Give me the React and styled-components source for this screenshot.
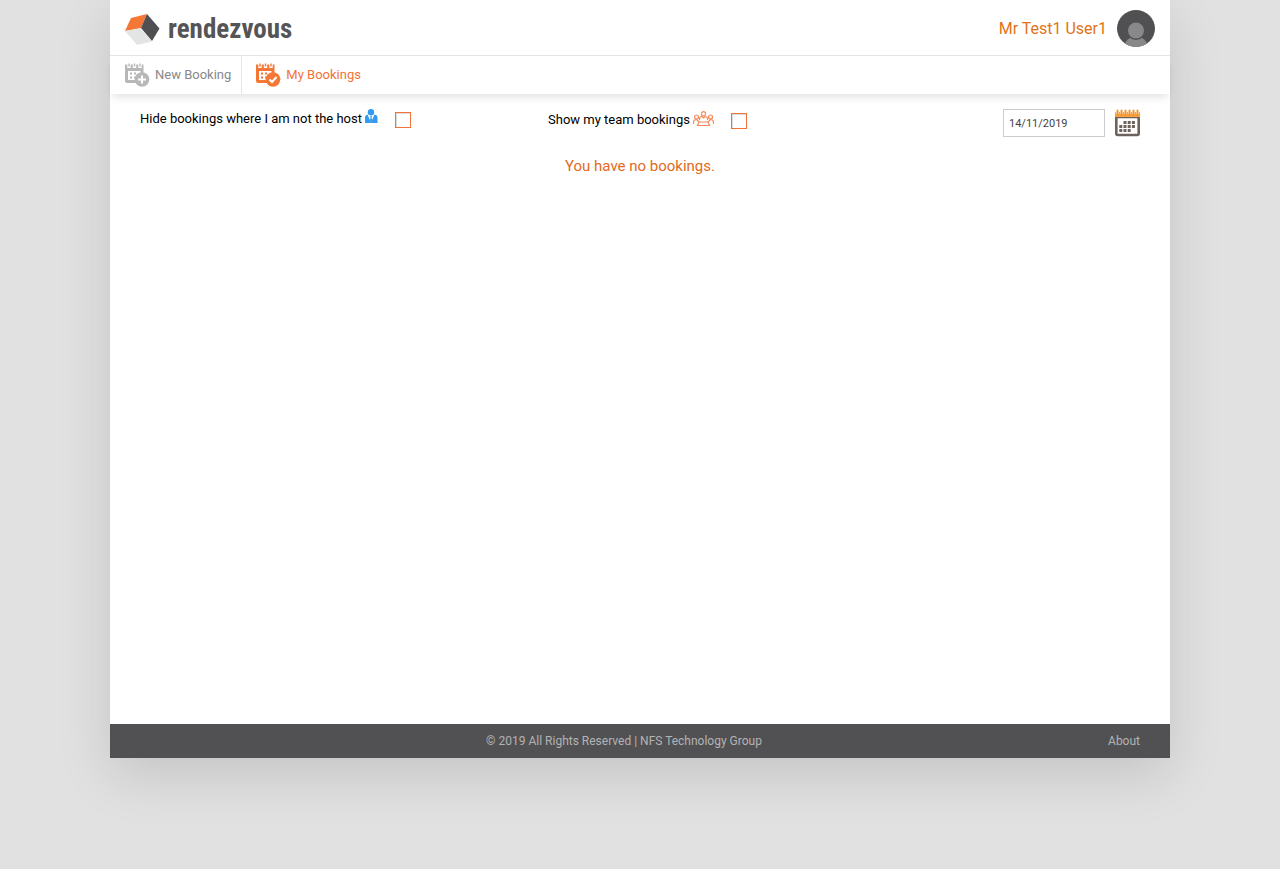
import React from "react";
import styled, { createGlobalStyle } from "styled-components";

const GlobalStyle = createGlobalStyle`
  *, *::before, *::after { box-sizing: border-box; }
  body {
    margin: 0;
    background: #e1e1e1;
    color: #000;
    font-family: Roboto, "Liberation Sans", sans-serif;
    font-size: 13px;
    line-height: 20px;
  }
`;

const Page = styled.div`
  min-height: 100vh;
  padding-bottom: 111px;
  display: flex;
  flex-direction: column;
  align-items: center;
  overflow: hidden;
`;

const Sheet = styled.div`
  display: flex;
  flex: 1;
  flex-direction: column;
  width: 100%;
  max-width: 1060px;
  background: #fff;
  box-shadow: 0 17px 50px rgba(0, 0, 0, 0.13);
`;

const Header = styled.header`
  display: flex;
  align-items: center;
  justify-content: space-between;
  height: 56px;
  padding: 2px 15px 0;
  border-bottom: 1px solid #e4e4e4;
`;

const Brand = styled.a`
  display: flex;
  align-items: center;
  gap: 8px;
  color: #555557;
  text-decoration: none;
`;

const Wordmark = styled.span`
  font-family: "Roboto Condensed", "Liberation Sans", sans-serif;
  font-size: 27px;
  line-height: 36px;
  font-weight: 700;
`;

const UserLink = styled.a`
  display: flex;
  align-items: center;
  gap: 10px;
  color: #e27318;
  font-size: 16px;
  text-decoration: none;
`;

const Nav = styled.nav`
  display: flex;
  height: 38px;
  box-shadow: 0 6px 8px -3px rgba(0, 0, 0, 0.12);
`;

const NavLink = styled.a`
  display: flex;
  align-items: center;
  gap: 5px;
  padding: 0 10px 0 ${(p) => (p.$active ? "13px" : "14px")};
  border-right: 1px solid ${(p) => (p.$active ? "transparent" : "#e4e4e4")};
  color: ${(p) => (p.$active ? "#f47239" : "#888")};
  text-decoration: none;
`;

const Content = styled.main`
  flex: 1;
  padding: 15px 30px;
`;

const Filters = styled.div`
  display: grid;
  grid-template-columns: 408px 1fr auto;
  align-items: start;
`;

const Field = styled.label`
  display: flex;
  align-items: center;
  gap: 3px;
`;

const Checkbox = styled.input`
  appearance: none;
  width: 16px;
  height: 16px;
  margin: 2px 0 0 14px;
  border: 1px solid #f47239;
  background: #fff;
  box-shadow: inset 1px 1px 0 #ddd;
  &:checked { background: #f47239; }
`;

const DateField = styled.div`
  display: flex;
  align-items: center;
  gap: 10px;
`;

const DateInput = styled.input`
  width: 102px;
  height: 28px;
  padding: 0 5px;
  border: 1px solid #ccc;
  color: #444;
  font-family: inherit;
  font-size: 11px;
`;

const IconButton = styled.button`
  display: flex;
  padding: 0;
  border: 0;
  background: none;
  cursor: pointer;
`;

const Empty = styled.p`
  margin: 19px 0 0;
  color: #e26a22;
  font-size: 15px;
  text-align: center;
`;

const Footer = styled.footer`
  display: flex;
  align-items: center;
  height: 34px;
  padding: 0 30px;
  background: #515153;
  color: #b3b3b3;
  font-size: 12px;
`;

const Copyright = styled.span`
  flex: 1;
  text-align: center;
`;

const FooterLink = styled.a`
  color: inherit;
  text-decoration: none;
`;

const Cube = () => (
  <svg width="35" height="34" viewBox="0 -2 35 34" aria-hidden="true">
    <path d="M0 17 6 4 22 0 16 14Z" fill="#f47735" />
    <path d="M22 0 34.500 14.500 27 27 16 14Z" fill="#505052" />
    <path d="M0 17 15.500 14.500 27 27.500 12 31Z" fill="#e3e5e4" />
  </svg>
);

const Avatar = () => (
  <svg width="38" height="38" viewBox="0 0 38 38" aria-hidden="true">
    <defs>
      <clipPath id="avatar-disc"><ellipse cx="19" cy="18.500" rx="19" ry="18.500" /></clipPath>
    </defs>
    <g clipPath="url(#avatar-disc)">
      <rect width="38" height="38" fill="#505052" />
      <path d="M7 38C8 30 12 27 19 27S30 30 31 38Z" fill="#888" />
      <circle cx="19" cy="20.500" r="9.500" fill="#505052" />
      <circle cx="19" cy="20.500" r="8" fill="#888" />
    </g>
  </svg>
);

const BookingIcon = ({ color, children }) => (
  <svg width="26" height="26" viewBox="0 0 26 26" aria-hidden="true">
    <path d="M1 2.500H19.500V12H16.500V9H4V18H12V21H3Q1 21 1 19Z" fill={color} />
    <path d="M5 2V6M10.500 2V6M16 2V6" stroke="#fff" strokeWidth="3.400" />
    <path d="M5 1.500V4.500M10.500 1.500V4.500M16 1.500V4.500" stroke={color} strokeWidth="1.400" />
    <path d="M6 11.500h2M10 11.500h2M6 15.500h2M10 15.500h2" stroke={color} strokeWidth="2" />
    <circle cx="18" cy="17.500" r="7.300" fill={color} />
    <path d={children} fill="none" stroke="#fff" strokeWidth="2" />
  </svg>
);

const HostIcon = () => (
  <svg width="13" height="20" viewBox="0 0 13 20" aria-hidden="true">
    <circle cx="6" cy="3.200" r="3.200" fill="#339af0" />
    <path d="M0 14V8.500Q0 6 2.500 5.500L6 13.500 9.500 5.500Q12.500 6 12.500 8.500V14Z" fill="#339af0" />
    <path d="M5.200 7h1.800l-.4 1.600.7 2.900-1.200 2-1.200-2 .7-2.900Z" fill="#339af0" />
  </svg>
);

const TeamIcon = () => (
  <svg width="21" height="22" viewBox="0 -2 21 22" fill="none" stroke="#f58a5a" strokeWidth="1.200" aria-hidden="true">
    <circle cx="10.500" cy="2.800" r="2.100" />
    <circle cx="3.500" cy="6" r="2" />
    <circle cx="17.500" cy="6" r="2" />
    <path d="M6.500 9V8Q6.500 5.500 9 5.500L10.500 7 12 5.500Q14.500 5.500 14.500 8V9M.5 13V11Q.5 8.500 3.500 8.500L6 11H15L17.500 8.500Q20.500 8.500 20.500 11V13M6 11 4.500 14.500H16.500L15 11" />
  </svg>
);

const CalendarIcon = () => (
  <svg width="25" height="28" viewBox="0 0 25 28" aria-hidden="true">
    <rect x="1.300" y="8" width="22.400" height="18" rx="1.500" fill="#fff" stroke="#6b625c" strokeWidth="2.600" />
    <path d="M0 8V4Q0 3 1 3H24Q25 3 25 4V8Z" fill="#f9a03f" />
    <path d="M2.500 1V5M6.500 1V5M10.500 1V5M14.500 1V5M18.500 1V5M22.500 1V5" stroke="#fff" strokeWidth="2.800" />
    <path d="M2.500 1.500V6M6.500 1.500V6M10.500 1.500V6M14.500 1.500V6M18.500 1.500V6M22.500 1.500V6" stroke="#f7942a" strokeWidth="2" strokeLinecap="round" />
    <path d="M0 8.500H25" stroke="#6b625c" />
    <path d="M8.500 13.500h12.500M4.300 17.500h16.700M4.300 21.500h12.500" stroke="#6b625c" strokeWidth="2.800" strokeDasharray="3 1.200" />
  </svg>
);

export default function App() {
  return (
    <Page>
      <GlobalStyle />
      <Sheet>
        <Header>
          <Brand href="#">
            <Cube />
            <Wordmark>rendezvous</Wordmark>
          </Brand>
          <UserLink href="#">
            Mr Test1 User1
            <Avatar />
          </UserLink>
        </Header>
        <Nav>
          <NavLink href="#">
            <BookingIcon color="#b8b8b8">M18 13.500v8M14 17.500h8</BookingIcon>
            New Booking
          </NavLink>
          <NavLink href="#" $active>
            <BookingIcon color="#f47735">M14.500 17.500 17 20 21.500 15</BookingIcon>
            My Bookings
          </NavLink>
        </Nav>
        <Content>
          <Filters>
            <Field>
              Hide bookings where I am not the host
              <HostIcon />
              <Checkbox type="checkbox" />
            </Field>
            <Field>
              Show my team bookings
              <TeamIcon />
              <Checkbox type="checkbox" />
            </Field>
            <DateField>
              <DateInput type="text" aria-label="Date" defaultValue="14/11/2019" />
              <IconButton type="button" aria-label="Open calendar">
                <CalendarIcon />
              </IconButton>
            </DateField>
          </Filters>
          <Empty>You have no bookings.</Empty>
        </Content>
        <Footer>
          <Copyright>© 2019 All Rights Reserved | NFS Technology Group</Copyright>
          <FooterLink href="#">About</FooterLink>
        </Footer>
      </Sheet>
    </Page>
  );
}
